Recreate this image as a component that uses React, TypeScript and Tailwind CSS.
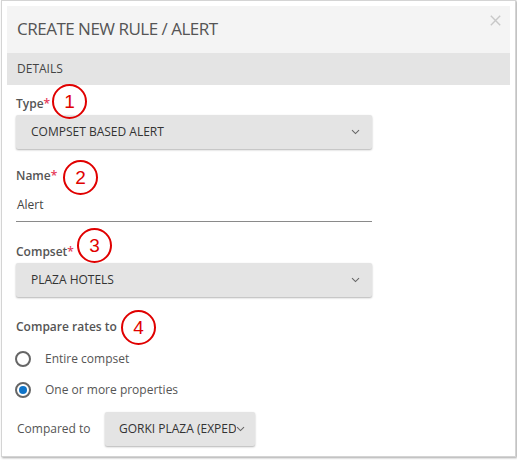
import React from "react";

const Chevron = () => (
  <svg width="9" height="6" viewBox="0 0 9 6" className="shrink-0">
    <path d="M1 1.2 L4.5 4.6 L8 1.2" fill="none" stroke="#666" strokeWidth="1.1" />
  </svg>
);

const Badge = ({ n, className }: { n: string; className: string }) => (
  <div
    className={
      "absolute w-[35px] h-[35px] rounded-full border-2 border-[#e00000] flex items-center justify-center text-[#e00000] text-[19px] font-normal leading-none " +
      className
    }
    style={{ fontFamily: "'Liberation Sans', Arial, sans-serif" }}
  >
    {n}
  </div>
);

const Select = ({ text }: { text: string }) => (
  <div className="h-[34px] w-[356px] bg-[#e4e4e4] rounded-[2px] shadow-[0_1px_2px_rgba(0,0,0,0.3)] flex items-center justify-between pl-[15px] pr-[12px] text-[12px] text-[#333]">
    <span>{text}</span>
    <Chevron />
  </div>
);

export default function App() {
  return (
    <div
      className="w-[517px] h-[460px] bg-white"
      style={{ fontFamily: "'Open Sans', 'Noto Sans', sans-serif" }}
    >
      <div className="ml-[1px] w-[515px] h-[457px] border border-[#d4d4d4] shadow-[1px_1px_2px_rgba(0,0,0,0.35)] p-[5px] flex flex-col">
        <div className="h-[47px] bg-[#f4f4f4] flex items-center justify-between pl-[10px] pr-[9px] shrink-0">
          <span className="text-[17px] text-[#555] tracking-[-0.5px] mt-[-1px]">CREATE NEW RULE / ALERT</span>
          <svg width="11" height="11" viewBox="0 0 11 11" className="self-start mt-[9px]">
            <path d="M0.8 0.8 L10.2 10.2 M10.2 0.8 L0.8 10.2" stroke="#c8c8c8" strokeWidth="1.4" />
          </svg>
        </div>
        <div className="h-[32px] bg-[#e4e4e4] flex items-center pl-[10px] shrink-0">
          <span className="text-[12px] text-[#444]">DETAILS</span>
        </div>
        <div className="pl-[9px] pt-[11px] text-[#555]">
          <div className="relative h-[16px] text-[12px] leading-[16px] font-semibold">
            Type<span className="text-[#e53958]">*</span>
            <Badge n="1" className="left-[36px] top-[-12px]" />
          </div>
          <div className="mt-[3px]">
            <Select text="COMPSET BASED ALERT" />
          </div>
          <div className="relative mt-[19px] h-[16px] text-[12px] leading-[16px] font-semibold">
            Name<span className="text-[#e53958]">*</span>
            <Badge n="2" className="left-[47px] top-[-8px]" />
          </div>
          <div className="mt-[13px] w-[356px] border-b border-[#8a8a8a] pb-[8px] pl-[1px] text-[12px] leading-[16px] text-[#444]">
            Alert
          </div>
          <div className="relative mt-[22px] h-[16px] text-[12px] leading-[16px] font-semibold">
            Compset<span className="text-[#e53958]">*</span>
            <Badge n="3" className="left-[61px] top-[-16px]" />
          </div>
          <div className="mt-[3px]">
            <Select text="PLAZA HOTELS" />
          </div>
          <div className="relative mt-[22px] h-[16px] text-[12px] leading-[16px] font-semibold">
            Compare rates to
            <Badge n="4" className="left-[105px] top-[-9px]" />
          </div>
          <div className="mt-[12px] h-[24px] flex items-center text-[12px]">
            <div className="w-[16px] h-[16px] rounded-full border-2 border-[#666] ml-[-1px]" />
            <span className="ml-[14px]">Entire compset</span>
          </div>
          <div className="mt-[7px] h-[24px] flex items-center text-[12px]">
            <div className="w-[16px] h-[16px] rounded-full border-2 border-[#666] ml-[-1px] flex items-center justify-center">
              <div className="w-[8px] h-[8px] rounded-full bg-[#0f74c8]" />
            </div>
            <span className="ml-[14px]">One or more properties</span>
          </div>
          <div className="mt-[10px] flex items-center">
            <span className="text-[12px] w-[89px] pl-[1px]">Compared to</span>
            <div className="h-[34px] w-[150px] bg-[#e4e4e4] rounded-[2px] shadow-[0_1px_2px_rgba(0,0,0,0.3)] flex items-center pl-[14px] text-[12px] text-[#333]">
              <span className="w-[117px] overflow-hidden whitespace-nowrap">GORKI PLAZA (EXPEDIA)</span>
              <Chevron />
            </div>
          </div>
        </div>
      </div>
    </div>
  );
}
